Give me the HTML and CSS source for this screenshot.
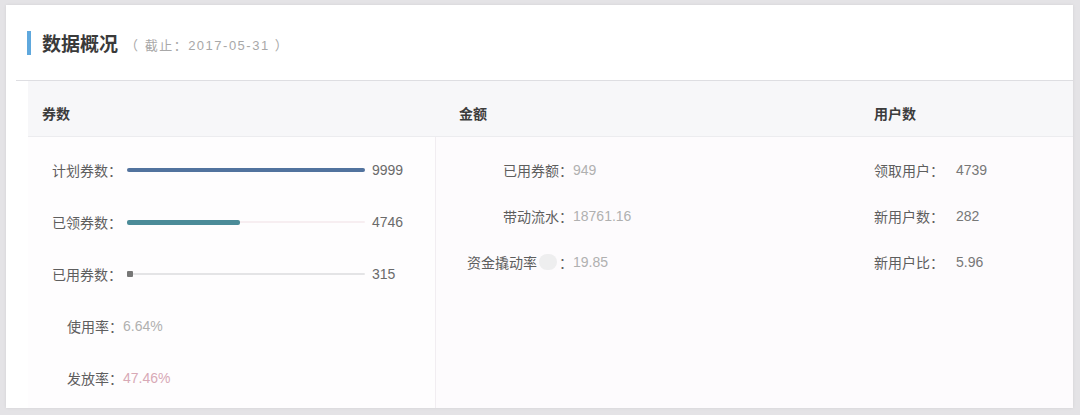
FILE: index.html
```html
<!DOCTYPE html>
<html lang="zh-CN">
<head>
    <meta charset="UTF-8">
    <title>数据概况</title>
    <link rel="stylesheet" href="styles.css">
</head>
<body>
    <div class="card">
        <header class="card-head">
            <span class="title-mark"></span>
            <h1>数据概况</h1>
            <span class="subtitle">（ 截止：2017-05-31 ）</span>
        </header>

        <div class="overview">
            <div class="overview-head">
                <div class="col col-coupon">券数</div>
                <div class="col col-amount">金额</div>
                <div class="col col-user">用户数</div>
            </div>

            <div class="overview-body">
                <div class="col col-coupon">
                    <div class="bar-row">
                        <span class="label">计划券数：</span>
                        <span class="bar-track"><span class="bar-fill fill-plan" style="width: 238px"></span></span>
                        <span class="bar-num">9999</span>
                    </div>
                    <div class="bar-row">
                        <span class="label">已领券数：</span>
                        <span class="bar-track track-pink"><span class="bar-fill fill-got" style="width: 113px"></span></span>
                        <span class="bar-num">4746</span>
                    </div>
                    <div class="bar-row">
                        <span class="label">已用券数：</span>
                        <span class="bar-track track-thin"><span class="bar-dot"></span></span>
                        <span class="bar-num">315</span>
                    </div>
                    <div class="rate-row">
                        <span class="label">使用率：</span><span class="value">6.64%</span>
                    </div>
                    <div class="rate-row">
                        <span class="label">发放率：</span><span class="value value-pink">47.46%</span>
                    </div>
                </div>

                <div class="col col-amount">
                    <div class="amount-row">
                        <span class="amount-label">已用券额：</span><span class="value">949</span>
                    </div>
                    <div class="amount-row">
                        <span class="amount-label">带动流水：</span><span class="value">18761.16</span>
                    </div>
                    <div class="amount-row">
                        <span class="amount-label">资金撬动率<span class="smudge"></span>：</span><span class="value">19.85</span>
                    </div>
                </div>

                <div class="col col-user">
                    <div class="user-row">
                        <span class="label">领取用户：</span><span class="user-num">4739</span>
                    </div>
                    <div class="user-row">
                        <span class="label">新用户数：</span><span class="user-num">282</span>
                    </div>
                    <div class="user-row">
                        <span class="label">新用户比：</span><span class="user-num">5.96</span>
                    </div>
                </div>
            </div>
        </div>
    </div>
</body>
</html>
```

FILE: styles.css
```css
* {
    margin: 0;
    padding: 0;
    box-sizing: border-box;
}

body {
    font-family: "Liberation Sans", "Noto Sans CJK SC", sans-serif;
    font-size: 14px;
    color: #555;
    background-color: #e4e3e6;
    padding: 5px 0 0 6px;
    height: 415px;
    overflow: hidden;
}

.card {
    width: 1067px;
    height: 403px;
    background-color: #fff;
    box-shadow: 0 0 3px rgba(0, 0, 0, 0.08);
    display: flex;
    flex-direction: column;
}

/* 标题 */
.card-head {
    height: 76px;
    margin-left: 10px;
    padding-left: 11px;
    display: flex;
    align-items: center;
    border-bottom: 1px solid #dedee2;
}

.title-mark {
    width: 4px;
    height: 24px;
    background-color: #5fa8dd;
    margin-right: 11px;
}

h1 {
    font-size: 19px;
    font-weight: bold;
    color: #3a3a3a;
    margin-right: 7px;
}

.subtitle {
    font-size: 13px;
    color: #a8a8a8;
    letter-spacing: 1.5px;
    margin-top: 3px;
}

/* 表格 */
.overview {
    margin-left: 22px;
    flex: 1;
    display: flex;
    flex-direction: column;
}

.overview-head {
    height: 56px;
    padding-top: 9px;
    display: flex;
    align-items: center;
    background-color: #f7f7f9;
    border-bottom: 1px solid #ececef;
    font-weight: bold;
    color: #3c3c3c;
}

.col-coupon {
    width: 407px;
    padding-left: 14px;
}

.col-amount {
    width: 415px;
    padding-left: 24px;
}

.col-user {
    flex: 1;
    padding-left: 24px;
}

.overview-body {
    flex: 1;
    display: flex;
    background-color: #fdfbfd;
}

.overview-body .col-coupon {
    padding: 7px 0 0 24px;
    background-color: #fefdfe;
}

.overview-body .col-amount {
    padding: 10px 0 0 0;
    border-left: 1px solid #f1edf1;
}

.overview-body .col-user {
    padding: 10px 0 0 24px;
}

.bar-row,
.rate-row {
    height: 52px;
    display: flex;
    align-items: center;
}

.label {
    color: #5e5e5e;
}

.value {
    color: #b0b0b0;
}

.value-pink {
    color: #d8a9b6;
}

.bar-track {
    position: relative;
    width: 238px;
    height: 4px;
    border-radius: 2px;
    margin: 0 7px 0 5px;
    background-color: #f2f0f2;
}

.track-pink {
    background-color: #f7eef1;
    height: 2px;
}

.track-thin {
    background-color: #e4e4e6;
    height: 2px;
}

.bar-fill {
    position: absolute;
    left: 0;
    top: 50%;
    height: 4px;
    margin-top: -2px;
    border-radius: 2px;
}

.fill-plan {
    background-color: #52739e;
}

.fill-got {
    background-color: #4b8b98;
    height: 5px;
    margin-top: -2.5px;
}

.bar-dot {
    position: absolute;
    left: 0;
    top: -2px;
    width: 6px;
    height: 6px;
    border-radius: 1px;
    background-color: #777;
}

.bar-num {
    color: #6a6a6a;
}

.rate-row {
    padding-left: 15px;
}

.amount-row,
.user-row {
    height: 46px;
    display: flex;
    align-items: center;
}

.amount-label {
    width: 137px;
    text-align: right;
    color: #5e5e5e;
    display: inline-flex;
    justify-content: flex-end;
    align-items: center;
}

.smudge {
    display: inline-block;
    width: 18px;
    height: 16px;
    border-radius: 8px;
    background-color: #eeeeef;
    margin: 0 2px;
}

.user-num {
    color: #777;
    margin-left: 12px;
}
```
